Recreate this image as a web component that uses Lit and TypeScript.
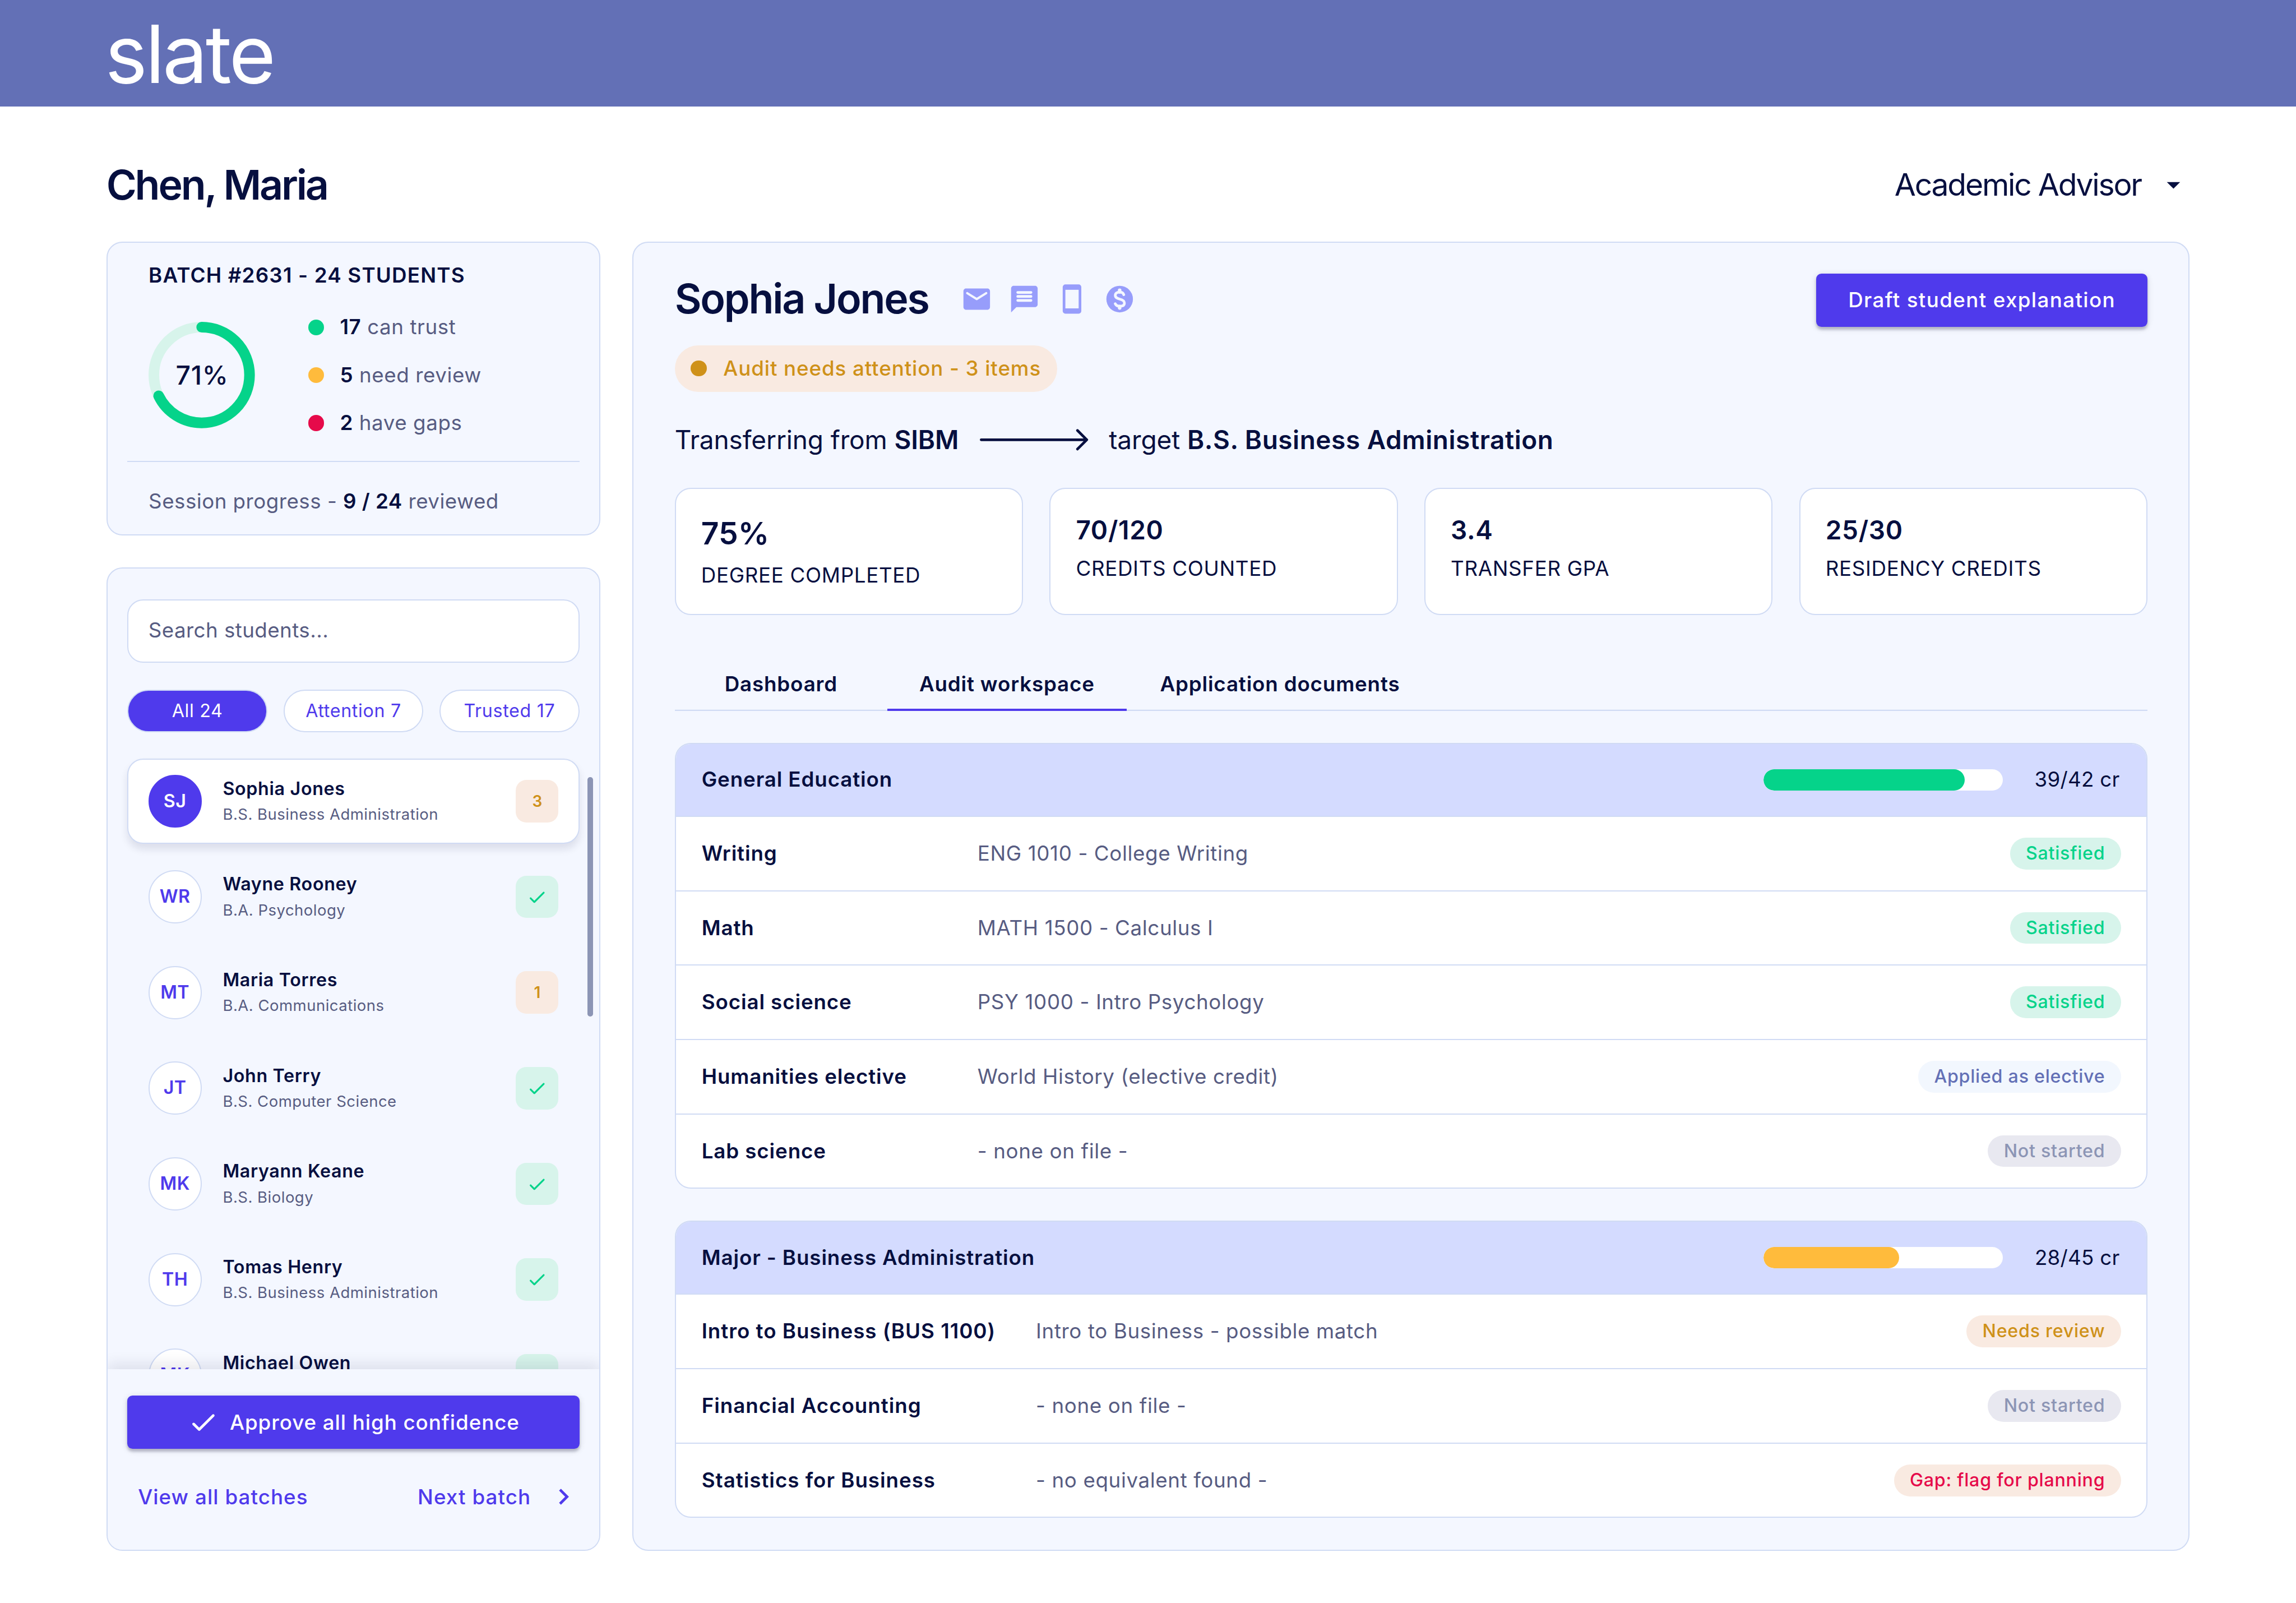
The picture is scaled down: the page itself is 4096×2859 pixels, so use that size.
import { LitElement, html, css, svg } from "lit";
import { customElement, property } from "lit/decorators.js";
import { classMap } from "lit/directives/class-map.js";
import { styleMap } from "lit/directives/style-map.js";

type Tone = "ok" | "warn" | "info" | "idle" | "gap";

interface Student {
  initials: string;
  name: string;
  program: string;
  flags: number;
}

interface Requirement {
  name: string;
  match: string;
  status: string;
  tone: Tone;
}

interface Section {
  title: string;
  credits: string;
  fill: number;
  tone: Tone;
  wide: boolean;
  rows: Requirement[];
}

const students: Student[] = [
  { initials: "SJ", name: "Sophia Jones", program: "B.S. Business Administration", flags: 3 },
  { initials: "WR", name: "Wayne Rooney", program: "B.A. Psychology", flags: 0 },
  { initials: "MT", name: "Maria Torres", program: "B.A. Communications", flags: 1 },
  { initials: "JT", name: "John Terry", program: "B.S. Computer Science", flags: 0 },
  { initials: "MK", name: "Maryann Keane", program: "B.S. Biology", flags: 0 },
  { initials: "TH", name: "Tomas Henry", program: "B.S. Business Administration", flags: 0 },
  { initials: "MK", name: "Michael Owen", program: "B.S. Biology", flags: 0 },
];

const sections: Section[] = [
  {
    title: "General Education",
    credits: "39/42 cr",
    fill: 84,
    tone: "ok",
    wide: false,
    rows: [
      { name: "Writing", match: "ENG 1010 - College Writing", status: "Satisfied", tone: "ok" },
      { name: "Math", match: "MATH 1500 - Calculus I", status: "Satisfied", tone: "ok" },
      { name: "Social science", match: "PSY 1000 - Intro Psychology", status: "Satisfied", tone: "ok" },
      { name: "Humanities elective", match: "World History (elective credit)", status: "Applied as elective", tone: "info" },
      { name: "Lab science", match: "- none on file -", status: "Not started", tone: "idle" },
    ],
  },
  {
    title: "Major - Business Administration",
    credits: "28/45 cr",
    fill: 56.7,
    tone: "warn",
    wide: true,
    rows: [
      { name: "Intro to Business (BUS 1100)", match: "Intro to Business - possible match", status: "Needs review", tone: "warn" },
      { name: "Financial Accounting", match: "- none on file -", status: "Not started", tone: "idle" },
      { name: "Statistics for Business", match: "- no equivalent found -", status: "Gap: flag for planning", tone: "gap" },
    ],
  },
];

const stats = [
  { value: "75%", label: "DEGREE COMPLETED", lead: true },
  { value: "70/120", label: "CREDITS COUNTED", lead: false },
  { value: "3.4", label: "TRANSFER GPA", lead: false },
  { value: "25/30", label: "RESIDENCY CREDITS", lead: false },
];

const checkPath = svg`<path d="M9 16.17 5.53 12.7c-.39-.39-1.02-.39-1.41 0s-.39 1.02 0 1.41l4.18 4.18c.39.39 1.02.39 1.41 0L20.29 7.71c.39-.39.39-1.02 0-1.41s-1.02-.39-1.41 0z"/>`;

/* Colours and box model shared by every element. */
const base = css`
  :host {
    display: block;
    --navy: #060f3f;
    --slate: #575c82;
    --line: #d0dbf4;
    --panel: #f4f7ff;
    --primary: #4f3aec;
    --green: #05d38a;
    --green-bg: #d7f4eb;
    --amber: #ffbb3c;
    --ochre: #cf9119;
    --ochre-bg: #f9eae1;
    --red: #e60a4a;
    color: var(--navy);
  }
  *,
  *::before,
  *::after {
    box-sizing: border-box;
  }
  svg {
    display: block;
    flex: none;
  }
`;

@customElement("batch-summary")
export class BatchSummary extends LitElement {
  static styles = [
    base,
    css`
      .card {
        height: 221px;
        padding: 12px 15px 0;
        background: var(--panel);
        border: 1px solid var(--line);
        border-radius: 12px;
      }
      .title {
        padding-left: 16px;
        font-size: 15.5px;
        line-height: 24.5px;
        font-weight: 600;
        letter-spacing: 0.5px;
      }
      .overview {
        display: flex;
        align-items: center;
        gap: 40px;
        margin: 15px 0 16.5px;
        padding-left: 16px;
      }
      .ring {
        display: grid;
        place-items: center;
        width: 80px;
        height: 80px;
      }
      .ring > * {
        grid-area: 1 / 1;
      }
      .ring-value {
        padding-left: 0.5px;
        font-size: 19.6px;
        line-height: 24px;
        font-weight: 500;
        letter-spacing: 0.3px;
      }
      .track {
        stroke: var(--green-bg);
      }
      .arc {
        stroke: var(--green);
        stroke-linecap: round;
      }
      .legend {
        display: grid;
        gap: 12px;
      }
      .entry {
        display: flex;
        align-items: center;
        gap: 12px;
        font-size: 15.5px;
        line-height: 24px;
        color: var(--slate);
        letter-spacing: 0.24px;
      }
      .dot {
        width: 12px;
        height: 12px;
        border-radius: 50%;
        background: var(--green);
      }
      .dot.amber {
        background: var(--amber);
      }
      .dot.red {
        background: var(--red);
      }
      b {
        font-weight: 600;
        color: var(--navy);
      }
      .session {
        padding: 17.5px 0 0 16px;
        border-top: 1px solid var(--line);
        font-size: 15.5px;
        line-height: 24px;
        color: var(--slate);
        letter-spacing: 0.2px;
      }
    `,
  ];

  render() {
    const radius = 36;
    const length = 2 * Math.PI * radius;
    return html`
      <section class="card">
        <div class="title">BATCH #2631 - 24 STUDENTS</div>
        <div class="overview">
          <div class="ring">
            <svg width="80" height="80" viewBox="0 0 80 80" fill="none" stroke-width="8">
              <circle class="track" cx="40" cy="40" r=${radius}></circle>
              <circle class="arc" cx="40" cy="40" r=${radius} transform="rotate(-90 40 40)"
                stroke-dasharray="${length * 0.677} ${length}"></circle>
            </svg>
            <span class="ring-value">71%</span>
          </div>
          <div class="legend">
            <div class="entry"><i class="dot"></i><span><b>17</b> can trust</span></div>
            <div class="entry"><i class="dot amber"></i><span><b>5</b> need review</span></div>
            <div class="entry"><i class="dot red"></i><span><b>2</b> have gaps</span></div>
          </div>
        </div>
        <div class="session">Session progress - <b>9 / 24</b> reviewed</div>
      </section>
    `;
  }
}

@customElement("student-list")
export class StudentList extends LitElement {
  static styles = [
    base,
    css`
      .card {
        position: relative;
        display: flex;
        flex-direction: column;
        height: 740px;
        padding-top: 23px;
        background: var(--panel);
        border: 1px solid var(--line);
        border-radius: 12px;
        overflow: hidden;
      }
      .search {
        flex: none;
        height: 48px;
        margin: 0 15px;
        padding: 0 15px;
        background: #fff;
        border: 1px solid var(--line);
        border-radius: 12px;
        font-size: 15.5px;
        line-height: 45px;
        color: var(--slate);
        letter-spacing: 0.18px;
      }
      .filters {
        display: grid;
        grid-template-columns: repeat(3, 1fr);
        gap: 12px;
        margin: 20px 15px 10px;
      }
      .filter {
        height: 32px;
        border: 1px solid var(--line);
        border-radius: 16px;
        background: #fff;
        color: var(--primary);
        font-size: 13.6px;
        line-height: 30px;
        text-align: center;
        letter-spacing: 0.28px;
      }
      .filter.on {
        background: var(--primary);
        color: #fff;
      }
      .list {
        flex: 1;
        min-height: 0;
        display: flex;
        flex-direction: column;
        gap: 8px;
        padding: 10px 15px 0;
        overflow: hidden;
      }
      .row {
        flex: none;
        display: flex;
        align-items: center;
        gap: 16px;
        height: 64px;
        padding: 0 15px;
        border: 1px solid transparent;
        border-radius: 12px;
      }
      .row.current {
        background: #fff;
        border-color: var(--line);
        box-shadow: 0 4px 6px rgba(20, 20, 60, 0.1);
      }
      .avatar {
        flex: none;
        width: 40px;
        height: 40px;
        border: 1px solid var(--line);
        border-radius: 50%;
        background: #fff;
        color: var(--primary);
        font-size: 13.6px;
        line-height: 38px;
        font-weight: 600;
        text-align: center;
        letter-spacing: 0.2px;
      }
      .current .avatar {
        background: var(--primary);
        border-color: var(--primary);
        color: #fff;
      }
      .who {
        flex: 1;
      }
      .name {
        font-size: 13.6px;
        line-height: 20px;
        font-weight: 600;
        letter-spacing: 0.28px;
      }
      .program {
        font-size: 11.6px;
        line-height: 19px;
        color: var(--slate);
        letter-spacing: 0.21px;
      }
      .badge {
        display: grid;
        place-items: center;
        width: 32px;
        height: 32px;
        border-radius: 8px;
        background: var(--green-bg);
        fill: var(--green);
        font-size: 11.8px;
        font-weight: 600;
      }
      .badge.flagged {
        background: var(--ochre-bg);
        color: var(--ochre);
      }
      .thumb {
        position: absolute;
        top: 157px;
        right: 5px;
        width: 4px;
        height: 180px;
        border-radius: 2px;
        background: #8c95b5;
      }
      .footer {
        position: relative;
        flex: none;
        height: 136px;
        padding: 20px 15px 0;
        background: var(--panel);
        box-shadow: 0 -4px 10px rgba(20, 20, 60, 0.1);
      }
      .approve {
        display: flex;
        align-items: center;
        justify-content: center;
        gap: 8px;
        height: 40px;
        border-radius: 4px;
        background: var(--primary);
        box-shadow: 0 2px 2px rgba(10, 10, 40, 0.2), 0 1px 5px rgba(10, 10, 40, 0.14);
        color: #fff;
        fill: #fff;
        font-size: 15.5px;
        font-weight: 500;
        letter-spacing: 0.4px;
      }
      .links {
        display: flex;
        align-items: center;
        justify-content: space-between;
        height: 40px;
        margin-top: 16px;
        padding-left: 8px;
        color: var(--primary);
        font-size: 15.5px;
        font-weight: 500;
        letter-spacing: 0.45px;
      }
      .next {
        display: flex;
        align-items: center;
        gap: 12.6px;
        fill: var(--primary);
      }
    `,
  ];

  render() {
    return html`
      <section class="card">
        <div class="search">Search students...</div>
        <div class="filters">
          <div class="filter on">All 24</div>
          <div class="filter">Attention 7</div>
          <div class="filter">Trusted 17</div>
        </div>
        <div class="list">
          ${students.map(
            (s, i) => html`
              <div class=${classMap({ row: true, current: i === 0 })}>
                <div class="avatar">${s.initials}</div>
                <div class="who">
                  <div class="name">${s.name}</div>
                  <div class="program">${s.program}</div>
                </div>
                <div class=${classMap({ badge: true, flagged: s.flags > 0 })}>
                  ${s.flags > 0
                    ? s.flags
                    : html`<svg width="16" height="16" viewBox="0 0 24 24">${checkPath}</svg>`}
                </div>
              </div>
            `
          )}
        </div>
        <div class="thumb"></div>
        <div class="footer">
          <div class="approve">
            <svg width="24" height="24" viewBox="0 0 24 24">${checkPath}</svg>
            <span>Approve all high confidence</span>
          </div>
          <div class="links">
            <span>View all batches</span>
            <span class="next">
              <span>Next batch</span>
              <svg width="24" height="24" viewBox="0 0 24 24"><path d="M10 6 8.59 7.41 13.17 12l-4.58 4.59L10 18l6-6z"/></svg>
            </span>
          </div>
        </div>
      </section>
    `;
  }
}

@customElement("audit-section")
export class AuditSection extends LitElement {
  @property({ attribute: false }) section!: Section;

  static styles = [
    base,
    css`
      .table {
        border: 1px solid var(--line);
        border-radius: 12px;
        background: #fff;
        overflow: hidden;
        font-size: 15.5px;
        line-height: 24px;
      }
      .head,
      .row {
        display: flex;
        align-items: center;
        height: 56px;
        padding: 0 19px;
        border-bottom: 1px solid var(--line);
      }
      .head {
        height: 55px;
        background: #d4dbff;
      }
      .row:last-child {
        height: 55px;
        border-bottom: 0;
      }
      .title {
        flex: 1;
        padding-left: 0.4px;
        font-weight: 600;
        letter-spacing: 0.37px;
      }
      .bar {
        width: 180px;
        height: 16px;
        border-radius: 8px;
        background: #fff;
        overflow: hidden;
      }
      .fill {
        height: 16px;
        border-radius: 8px;
        background: var(--green);
      }
      .fill.warn {
        background: var(--amber);
      }
      .credits {
        width: 89px;
        padding-right: 1px;
        text-align: right;
        letter-spacing: 0.1px;
      }
      .name {
        width: 208px;
        padding-left: 0.4px;
        font-weight: 600;
        letter-spacing: 0.37px;
      }
      .wide .name {
        width: 252px;
        letter-spacing: 0.41px;
      }
      .match {
        flex: 1;
        color: var(--slate);
        letter-spacing: 0.26px;
      }
      .chip {
        height: 24px;
        padding: 0 12px;
        border-radius: 12px;
        font-size: 13.6px;
        line-height: 24px;
        font-weight: 500;
        letter-spacing: 0.31px;
      }
      .chip.ok {
        background: var(--green-bg);
        color: var(--green);
      }
      .chip.info {
        background: #f2f7fe;
        color: #6370b6;
      }
      .chip.idle {
        background: #e8e8f0;
        color: #8c95b5;
      }
      .chip.warn {
        background: var(--ochre-bg);
        color: var(--ochre);
      }
      .chip.gap {
        background: var(--ochre-bg);
        color: var(--red);
      }
    `,
  ];

  render() {
    const s = this.section;
    return html`
      <section class=${classMap({ table: true, wide: s.wide })}>
        <div class="head">
          <div class="title">${s.title}</div>
          <div class="bar">
            <div class=${classMap({ fill: true, [s.tone]: true })} style=${styleMap({ width: `${s.fill}%` })}></div>
          </div>
          <div class="credits">${s.credits}</div>
        </div>
        ${s.rows.map(
          (r) => html`
            <div class="row">
              <div class="name">${r.name}</div>
              <div class="match">${r.match}</div>
              <div class=${classMap({ chip: true, [r.tone]: true })}>${r.status}</div>
            </div>
          `
        )}
      </section>
    `;
  }
}

@customElement("student-audit")
export class StudentAudit extends LitElement {
  static styles = [
    base,
    css`
      .panel {
        height: 985px;
        padding: 23px 31px 0;
        background: var(--panel);
        border: 1px solid var(--line);
        border-radius: 12px;
      }
      .top {
        display: flex;
        align-items: center;
        height: 40px;
      }
      .name {
        padding-bottom: 2px;
        font-size: 31px;
        line-height: 36px;
        font-weight: 600;
        letter-spacing: -0.93px;
      }
      .actions {
        flex: 1;
        display: flex;
        gap: 12px;
        padding: 0 0 2px 24px;
        fill: #979dfb;
      }
      .cut {
        fill: var(--panel);
      }
      .coin {
        fill: none;
        stroke: var(--panel);
        stroke-linecap: round;
      }
      .draft {
        height: 40px;
        padding: 0 24px;
        border-radius: 4px;
        background: var(--primary);
        box-shadow: 0 2px 2px rgba(10, 10, 40, 0.2), 0 1px 5px rgba(10, 10, 40, 0.14);
        color: #fff;
        font-size: 15.5px;
        line-height: 40px;
        font-weight: 500;
        letter-spacing: 0.58px;
      }
      .alert {
        display: flex;
        align-items: center;
        gap: 12.5px;
        width: 288px;
        height: 35px;
        margin: 14px 0 20px;
        padding: 0 0 0.5px 12px;
        border-radius: 18px;
        background: var(--ochre-bg);
        color: var(--ochre);
        font-size: 15.5px;
        font-weight: 500;
        letter-spacing: 0.38px;
      }
      .dot {
        width: 12px;
        height: 12px;
        border-radius: 50%;
        background: var(--ochre);
      }
      .route {
        display: flex;
        align-items: center;
        height: 32px;
        margin-bottom: 20px;
        font-size: 19.4px;
        letter-spacing: -0.05px;
      }
      .route b {
        font-weight: 600;
      }
      .target b {
        letter-spacing: 0.23px;
      }
      .arrow {
        margin: 0 15px 0 16px;
        fill: none;
        stroke: var(--navy);
        stroke-width: 2;
        stroke-linecap: round;
        stroke-linejoin: round;
      }
      .stats {
        display: grid;
        grid-template-columns: repeat(4, 1fr);
        gap: 20px;
      }
      .stat {
        height: 96px;
        padding: 17px 19px 0;
        background: #fff;
        border: 1px solid var(--line);
        border-radius: 12px;
      }
      .value {
        font-size: 19.4px;
        line-height: 28px;
        font-weight: 600;
        letter-spacing: 0.3px;
      }
      .label {
        padding-top: 3.5px;
        font-size: 15.5px;
        line-height: 24px;
        letter-spacing: 0.28px;
      }
      .lead .value {
        font-size: 23.3px;
        line-height: 33px;
        letter-spacing: 0;
      }
      .tabs {
        display: flex;
        height: 48px;
        margin: 24px 0;
        box-shadow: inset 0 -1px var(--line);
        font-size: 15.5px;
        line-height: 24px;
        font-weight: 600;
        text-align: center;
        letter-spacing: 0.35px;
      }
      .tab {
        padding-top: 16px;
        width: 160px;
      }
      .tab.on {
        width: 180px;
        border-bottom: 2px solid var(--primary);
      }
      .tab.docs {
        width: 231px;
      }
      .sections {
        display: grid;
        gap: 24px;
      }
    `,
  ];

  render() {
    return html`
      <main class="panel">
        <div class="top">
          <div class="name">Sophia Jones</div>
          <div class="actions">
            <svg width="24" height="24" viewBox="0 0 24 24"><path d="M20 4H4c-1.1 0-2 .9-2 2v12c0 1.1.9 2 2 2h16c1.1 0 2-.9 2-2V6c0-1.1-.9-2-2-2zm-.4 4.25-7.07 4.42c-.32.2-.74.2-1.06 0L4.4 8.25c-.25-.16-.4-.43-.4-.72 0-.67.73-1.07 1.3-.72L12 11l6.7-4.19c.57-.35 1.3.05 1.3.72 0 .29-.15.56-.4.72z"/></svg>
            <svg width="24" height="24" viewBox="0 0 24 24">
              <path d="M20 2H4c-1.1 0-2 .9-2 2v18l4-4h14c1.1 0 2-.9 2-2V4c0-1.1-.9-2-2-2z"/>
              <g class="cut"><rect x="6" y="6" width="12" height="2" rx="1"/><rect x="6" y="9" width="12" height="2" rx="1"/><rect x="6" y="12" width="12" height="2" rx="1"/></g>
            </svg>
            <svg width="24" height="24" viewBox="0 0 24 24"><rect x="5" y="1" width="14" height="22" rx="2"/><rect class="cut" x="7" y="5" width="10" height="14"/></svg>
            <svg width="24" height="24" viewBox="0 0 24 24">
              <circle cx="12" cy="12" r="10"/>
              <path class="coin" stroke-width="2.67" d="M12 5.33V6.6M12 17.6v1.07"/>
              <path class="coin" stroke-width="2" d="M15.1 8.7C14.6 7.3 13.5 6.7 12.1 6.7c-2 0-3.4 1-3.4 2.5 0 1.8 1.6 2.3 3.4 2.8 2 .5 3.5 1.2 3.5 3 0 1.7-1.5 2.4-3.4 2.4-1.9 0-3-.7-3.5-1.9"/>
            </svg>
          </div>
          <div class="draft">Draft student explanation</div>
        </div>
        <div class="alert"><i class="dot"></i><span>Audit needs attention - 3 items</span></div>
        <div class="route">
          <span>Transferring from <b>SIBM</b></span>
          <svg class="arrow" width="82" height="18" viewBox="0 0 82 18"><path d="M1 9h79.500M73.500 2l7 7-7 7"/></svg>
          <span class="target">target <b>B.S. Business Administration</b></span>
        </div>
        <div class="stats">
          ${stats.map(
            (s) => html`
              <div class=${classMap({ stat: true, lead: s.lead })}>
                <div class="value">${s.value}</div>
                <div class="label">${s.label}</div>
              </div>
            `
          )}
        </div>
        <nav class="tabs">
          <div class="tab">Dashboard</div>
          <div class="tab on">Audit workspace</div>
          <div class="tab docs">Application documents</div>
        </nav>
        <div class="sections">
          ${sections.map((s) => html`<audit-section .section=${s}></audit-section>`)}
        </div>
      </main>
    `;
  }
}

@customElement("app-root")
export class AppRoot extends LitElement {
  static styles = [
    base,
    css`
      :host {
        height: 100vh;
        overflow: hidden;
        background: #fff;
        font-family: Inter, "Liberation Sans", sans-serif;
      }
      .page {
        width: 1728px;
        zoom: 2.37037;
      }
      .brand {
        height: 80px;
        padding: 1px 79px 0;
        background: #6370b6;
        color: #fff;
        font-size: 60.5px;
        line-height: 80px;
        letter-spacing: -1.6px;
      }
      .bar {
        display: flex;
        align-items: center;
        justify-content: space-between;
        height: 102px;
        padding: 16px 80px 0;
      }
      .advisor {
        font-size: 31px;
        font-weight: 600;
        letter-spacing: -1.34px;
      }
      .role {
        display: flex;
        align-items: center;
        gap: 12.5px;
        font-size: 23.3px;
        letter-spacing: -0.94px;
      }
      .columns {
        display: grid;
        grid-template-columns: 372px 1172px;
        gap: 24px;
        padding: 0 80px;
      }
      .side {
        display: grid;
        gap: 24px;
      }
    `,
  ];

  render() {
    return html`
      <div class="page">
        <header class="brand">slate</header>
        <div class="bar">
          <div class="advisor">Chen, Maria</div>
          <div class="role">
            <span>Academic Advisor</span>
            <svg width="24" height="24" viewBox="0 0 24 24" fill="#060f3f"><path d="m7 10 5 5 5-5z"/></svg>
          </div>
        </div>
        <div class="columns">
          <div class="side">
            <batch-summary></batch-summary>
            <student-list></student-list>
          </div>
          <student-audit></student-audit>
        </div>
      </div>
    `;
  }
}
